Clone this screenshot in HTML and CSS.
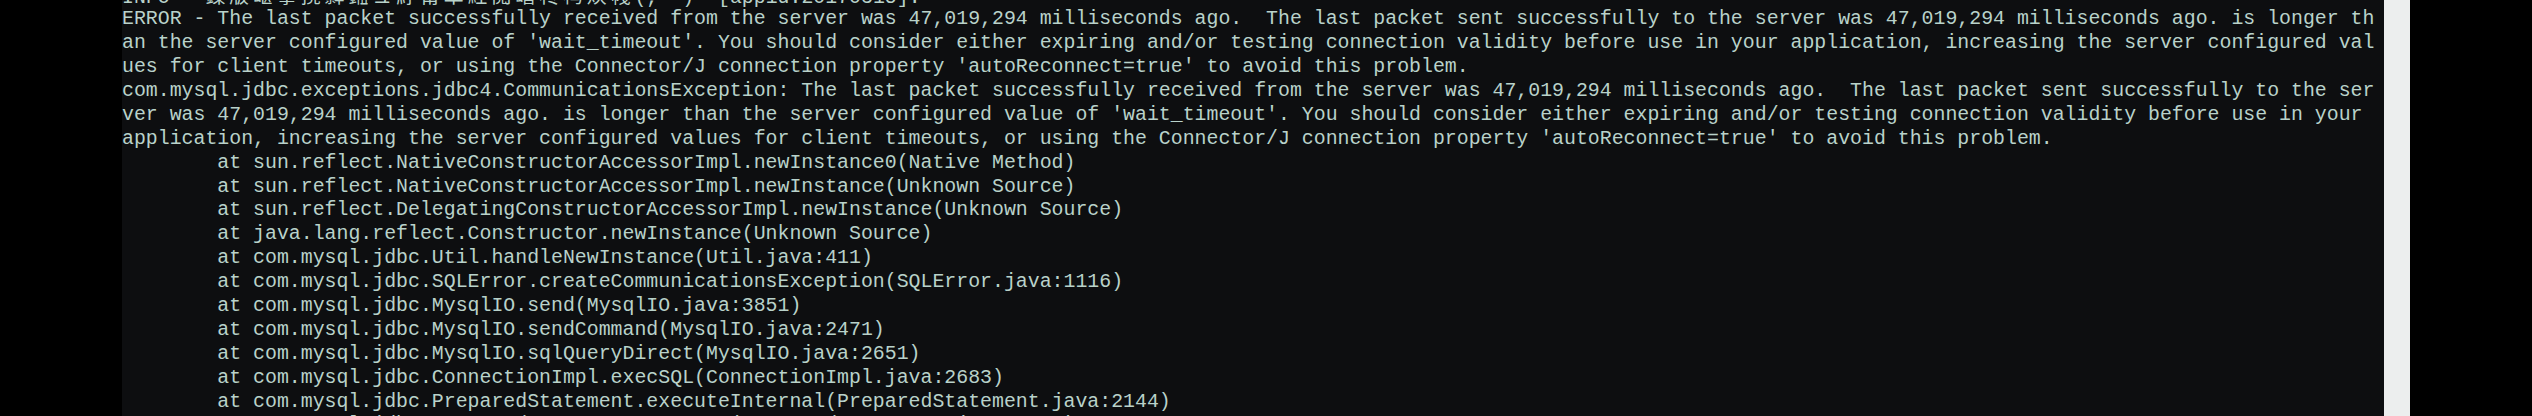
FILE: index.html
```html
<!DOCTYPE html>
<html>
<head>
<meta charset="utf-8">
<link rel="stylesheet" href="styles.css">
</head>
<body>
<div class="screen">
  <div class="gutter"></div>
  <div class="console">
    <div class="log">
      <div class="ln cut">INFO - <span class="cjk">鏁版嵁搴撹繛鎺ュ紓甯革紝閲嶆柊杩炴帴</span>(, -)  [appid:20170315].</div>
      <div class="ln">ERROR - The last packet successfully received from the server was 47,019,294 milliseconds ago.  The last packet sent successfully to the server was 47,019,294 milliseconds ago. is longer th</div>
      <div class="ln">an the server configured value of 'wait_timeout'. You should consider either expiring and/or testing connection validity before use in your application, increasing the server configured val</div>
      <div class="ln">ues for client timeouts, or using the Connector/J connection property 'autoReconnect=true' to avoid this problem.</div>
      <div class="ln">com.mysql.jdbc.exceptions.jdbc4.CommunicationsException: The last packet successfully received from the server was 47,019,294 milliseconds ago.  The last packet sent successfully to the ser</div>
      <div class="ln">ver was 47,019,294 milliseconds ago. is longer than the server configured value of 'wait_timeout'. You should consider either expiring and/or testing connection validity before use in your</div>
      <div class="ln">application, increasing the server configured values for client timeouts, or using the Connector/J connection property 'autoReconnect=true' to avoid this problem.</div>
      <div class="ln">        at sun.reflect.NativeConstructorAccessorImpl.newInstance0(Native Method)</div>
      <div class="ln">        at sun.reflect.NativeConstructorAccessorImpl.newInstance(Unknown Source)</div>
      <div class="ln">        at sun.reflect.DelegatingConstructorAccessorImpl.newInstance(Unknown Source)</div>
      <div class="ln">        at java.lang.reflect.Constructor.newInstance(Unknown Source)</div>
      <div class="ln">        at com.mysql.jdbc.Util.handleNewInstance(Util.java:411)</div>
      <div class="ln">        at com.mysql.jdbc.SQLError.createCommunicationsException(SQLError.java:1116)</div>
      <div class="ln">        at com.mysql.jdbc.MysqlIO.send(MysqlIO.java:3851)</div>
      <div class="ln">        at com.mysql.jdbc.MysqlIO.sendCommand(MysqlIO.java:2471)</div>
      <div class="ln">        at com.mysql.jdbc.MysqlIO.sqlQueryDirect(MysqlIO.java:2651)</div>
      <div class="ln">        at com.mysql.jdbc.ConnectionImpl.execSQL(ConnectionImpl.java:2683)</div>
      <div class="ln">        at com.mysql.jdbc.PreparedStatement.executeInternal(PreparedStatement.java:2144)</div>
      <div class="ln">        at com.mysql.jdbc.PreparedStatement.execute(PreparedStatement.java:1979)</div>
    </div>
  </div>
  <div class="scrollbar"></div>
  <div class="outside"></div>
</div>
</body>
</html>
```
FILE: styles.css
```css
html, body {
  margin: 0;
  padding: 0;
  background: #000;
}

.screen {
  display: flex;
  width: 2532px;
  height: 416px;
  background: #000;
  overflow: hidden;
}

.gutter {
  flex: none;
  width: 122px;
  background: #000;
}

.console {
  flex: none;
  width: 2262px;
  height: 416px;
  background: #0d0e10;
  overflow: hidden;
}

.log {
  margin-top: -16.6px;
  font-family: "Liberation Mono", monospace;
  font-size: 19.86px;
  color: #b9d2ca;
}

.ln {
  height: 23.9px;
  line-height: 23.9px;
  white-space: pre;
}

.ln.cut {
  line-height: 30px;
}

.cjk {
  font-family: "Noto Sans CJK SC", sans-serif;
  letter-spacing: 3.98px;
  line-height: 0;
}

.scrollbar {
  flex: none;
  width: 26px;
  background: #eceeee;
}

.outside {
  flex: 1;
  background: #000;
}
```
